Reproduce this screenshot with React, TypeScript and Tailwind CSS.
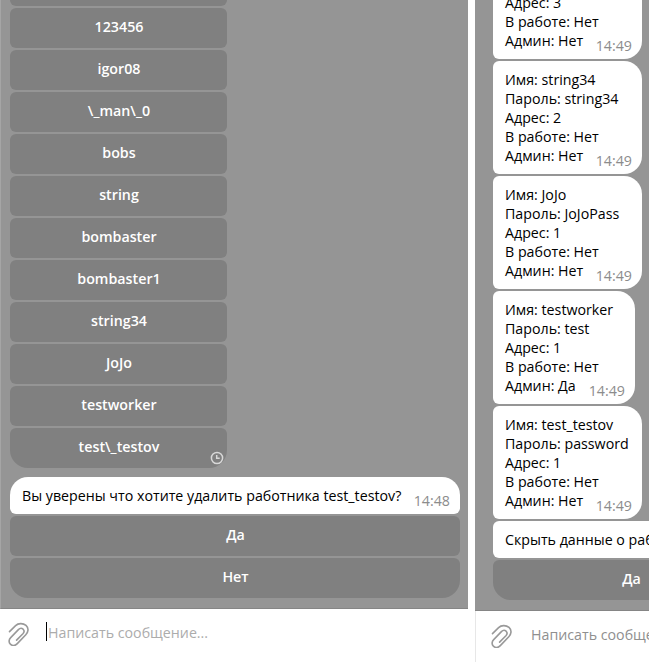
const names = ["123456", "igor08", "\\_man\\_0", "bobs", "string", "bombaster", "bombaster1", "string34", "JoJo", "testworker"];

const workers = [
  { name: "string34", pass: "string34", addr: "2", admin: "Нет", width: "w-[149px]" },
  { name: "JoJo", pass: "JoJoPass", addr: "1", admin: "Нет", width: "w-[149px]" },
  { name: "testworker", pass: "test", addr: "1", admin: "Да", width: "w-[142px]" },
  { name: "test_testov", pass: "password", addr: "1", admin: "Нет", width: "w-[149px]" },
];

function KeyButton({ label, className = "rounded-md" }: { label: string; className?: string }) {
  return (
    <div className={`relative flex h-10 shrink-0 items-center justify-center bg-[#808080] pb-[3px] pl-px text-[14.25px] leading-[21px] font-semibold text-white ${className}`}>
      {label}
      {label === "test\\_testov" && <Clock />}
    </div>
  );
}

function Clock() {
  return (
    <svg className="absolute right-[3px] bottom-[3px] h-[14px] w-[14px]" viewBox="0 0 14 14" fill="none" stroke="#d8d8d8" strokeWidth="1.5">
      <circle cx="7" cy="7" r="5.6" />
      <path d="M6.7 4v3.3h3" />
    </svg>
  );
}

function Clip() {
  return (
    <svg className="h-6 w-[22px] shrink-0" viewBox="0 0 22 24" fill="none" stroke="#999999" strokeWidth="1.6" strokeLinecap="round" strokeLinejoin="round">
      <path d="M1.5 9.6 7.6 3.6C10.2 1.2 14.8.8 18 3.4c3.1 2.9 2.3 6.7-.2 9.3l-8.5 8.9c-2.2 2.3-5 2.3-6.9.5-1.9-1.9-1.6-4.6.3-6.5l7.7-8c1.6-1.6 3.4-1.6 4.7-.4 1.3 1.3 1.2 3-.2 4.5l-6.3 6.4" />
    </svg>
  );
}

function WorkerBubble({ name, pass, addr, admin, width }: (typeof workers)[number]) {
  return (
    <div className={`relative h-[113px] shrink-0 rounded-l-md rounded-r-[18px] bg-white pt-[9px] pl-3 leading-[19px] whitespace-nowrap ${width}`}>
      <p>Имя: {name}</p>
      <p>Пароль: {pass}</p>
      <p>Адрес: {addr}</p>
      <p>В работе: Нет</p>
      <p>Админ: {admin}</p>
      <Time className="absolute right-[10px] bottom-1" value="14:49" />
    </div>
  );
}

function Time({ value, className }: { value: string; className: string }) {
  return <span className={`leading-[19px] text-[#8c8c8c] ${className}`}>{value}</span>;
}

export default function App() {
  return (
    <div className="flex h-[662px] w-[649px] overflow-hidden bg-white font-['Open_Sans',sans-serif] text-[14.23px] text-black">
      <section className="flex w-[468px] shrink-0 flex-col">
        <div className="flex h-[609px] shrink-0 flex-col justify-end overflow-hidden border-b border-l border-b-[#858585] border-l-[#a5a5a5] bg-[#959595] pr-2 pb-[10px] pl-[9px]">
          <div className="flex w-[217px] flex-col gap-0.5">
            <KeyButton label="" />
            {names.map((n) => (
              <KeyButton key={n} label={n} />
            ))}
            <KeyButton label={"test\\_testov"} className="rounded-t-md rounded-b-[18px]" />
          </div>
          <div className="mt-[9px] flex h-[37px] shrink-0 justify-between rounded-t-[18px] rounded-b-md bg-white pr-[10px] pl-3 leading-[19px] whitespace-nowrap">
            <span className="pt-[9px]">Вы уверены что хотите удалить работника test_testov?</span>
            <Time className="pt-[14px]" value="14:48" />
          </div>
          <KeyButton label="Да" className="mt-0.5 rounded-md" />
          <KeyButton label="Нет" className="mt-0.5 rounded-t-md rounded-b-[18px]" />
        </div>
        <div className="flex flex-1 items-start pt-[13px] pl-[8px]">
          <Clip />
          <div className="ml-4 h-[19px] w-px bg-black" />
          <span className="ml-[1px] leading-[21px] text-[#acacac]">Написать сообщение...</span>
        </div>
      </section>

      <section className="ml-[7px] flex w-[174px] shrink-0 flex-col overflow-hidden">
        <div className="flex h-[611px] shrink-0 flex-col items-start justify-end gap-0.5 overflow-hidden border-b border-b-[#858585] bg-[#959595] pb-[10px] pl-[18px]">
          <WorkerBubble name="string" pass="string" addr="3" admin="Нет" width="w-[149px]" />
          {workers.map((w) => (
            <WorkerBubble key={w.name} {...w} />
          ))}
          <div className="h-[37px] w-[276px] shrink-0 rounded-md bg-white pt-[9px] pl-3 leading-[19px] whitespace-nowrap">Скрыть данные о работнике?</div>
          <KeyButton label="Да" className="w-[276px] rounded-t-md rounded-b-[18px]" />
        </div>
        <div className="flex flex-1 items-start border-l border-[#e7e7e7] pt-[13px] pl-[15px] whitespace-nowrap">
          <Clip />
          <span className="ml-[18px] leading-[21px] text-[#8f8f8f]">Написать сообщение...</span>
        </div>
      </section>
    </div>
  );
}
